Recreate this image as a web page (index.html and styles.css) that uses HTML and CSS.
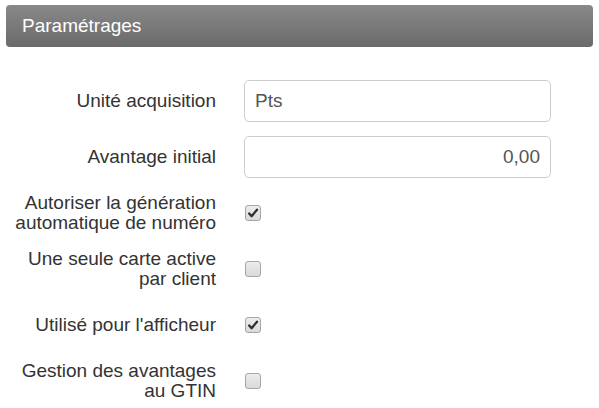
FILE: index.html
```html
<!DOCTYPE html>
<html>
<head>
    <title>Paramétrages</title>
    <link rel="stylesheet" href="styles.css">
</head>
<body>
    <div class="panel">
        <div class="panel-heading">Paramétrages</div>

        <!-- Settings form -->
        <form class="settings">
            <label class="label">Unité acquisition</label>
            <div class="control"><input type="text" class="field" value="Pts"></div>

            <label class="label">Avantage initial</label>
            <div class="control"><input type="text" class="field number" value="0,00"></div>

            <label class="label">Autoriser la génération<br>automatique de numéro</label>
            <div class="control"><span class="check checked"><svg viewBox="0 0 16 16"><path d="M3.6 8.6 L6.4 11.6 L12.6 4.2" /></svg></span></div>

            <label class="label">Une seule carte active<br>par client</label>
            <div class="control"><span class="check"></span></div>

            <label class="label">Utilisé pour l'afficheur</label>
            <div class="control"><span class="check checked"><svg viewBox="0 0 16 16"><path d="M3.6 8.6 L6.4 11.6 L12.6 4.2" /></svg></span></div>

            <label class="label">Gestion des avantages<br>au GTIN</label>
            <div class="control"><span class="check"></span></div>
        </form>
    </div>
</body>
</html>
```

FILE: styles.css
```css
body {
    margin: 0;
    padding: 5px 6px;
    background: #fff;
    color: #333;
    font-family: "Liberation Sans", Arial, sans-serif;
}
.panel-heading {
    height: 42px;
    line-height: 42px;
    padding-left: 16px;
    border-radius: 4px;
    background: linear-gradient(#898989, #6a6a6a);
    color: #fff;
    font-size: 19px;
}
.settings {
    display: grid;
    grid-template-columns: 210px 307px;
    grid-auto-rows: 42px;
    column-gap: 28px;
    row-gap: 14px;
    margin-top: 33px;
}
.label {
    align-self: center;
    text-align: right;
    font-size: 19px;
    line-height: 20px;
}
.control {
    display: flex;
    align-items: center;
}
.field {
    box-sizing: border-box;
    width: 100%;
    height: 42px;
    padding: 0 10px;
    border: 1px solid #ccc;
    border-radius: 5px;
    color: #555;
    font-family: inherit;
    font-size: 19px;
}
.number {
    text-align: right;
}
.check {
    box-sizing: border-box;
    display: block;
    width: 16px;
    height: 16px;
    margin-left: 1px;
    border: 1px solid #a6a6a6;
    border-radius: 3px;
    background: linear-gradient(#ececec, #d9d9d9);
}
.check svg {
    display: block;
    width: 14px;
    height: 14px;
}
.check path {
    fill: none;
    stroke: #2e2e2e;
    stroke-width: 2.6;
    stroke-linecap: round;
    stroke-linejoin: round;
}
```
